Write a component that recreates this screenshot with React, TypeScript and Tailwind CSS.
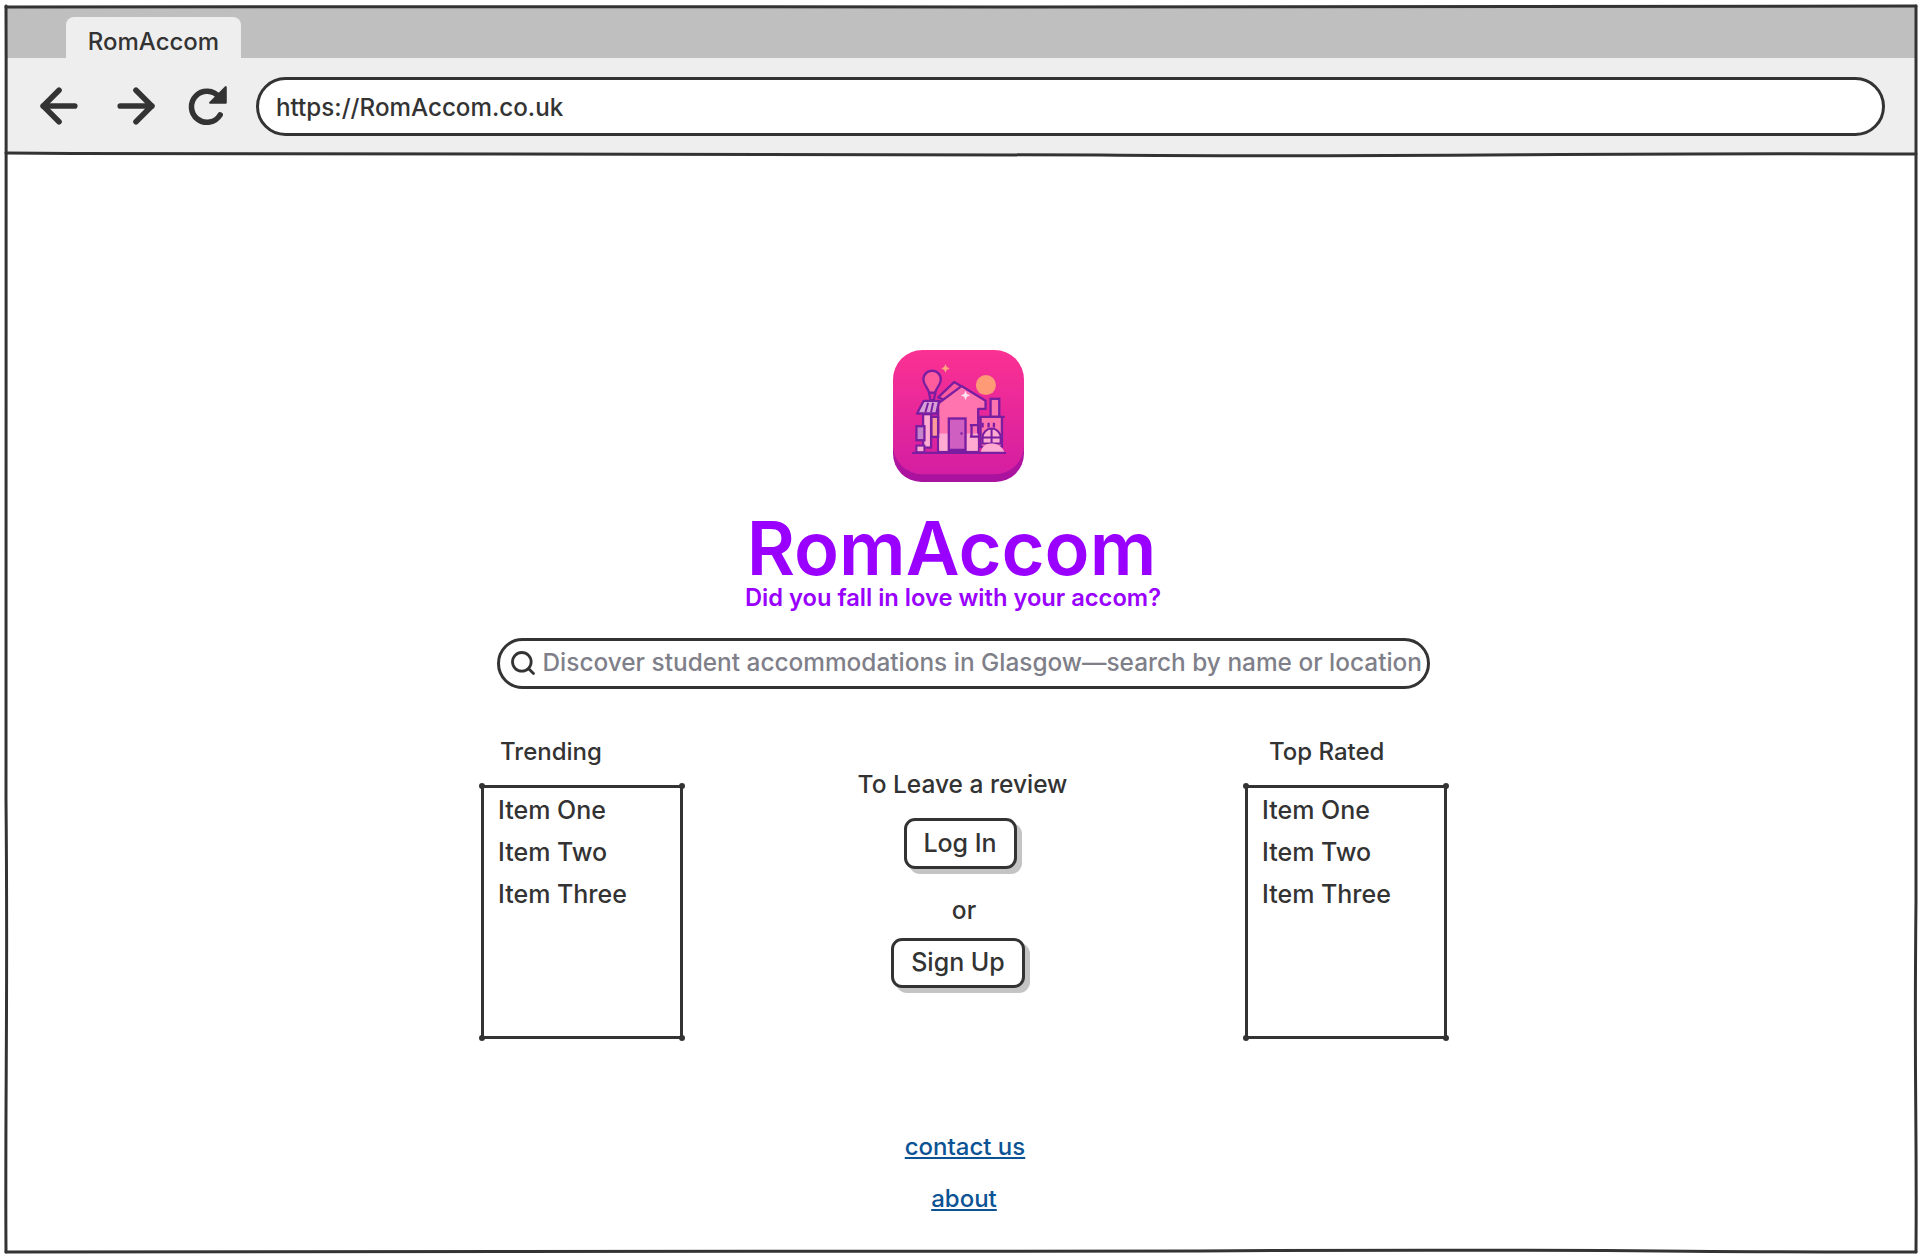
import { ArrowLeft, ArrowRight, Search } from "lucide-react";

const ink = "#333333";

function ReloadIcon() {
  return (
    <svg width="42" height="42" viewBox="0 0 38 38" fill="none">
      <path d="M30 27a14 14 0 1 1 -1 -16" stroke={ink} strokeWidth="5" strokeLinecap="round" />
      <path d="M35 2v14h-14z" fill={ink} stroke={ink} strokeWidth="2" strokeLinejoin="round" />
    </svg>
  );
}

// the app icon, drawn in the coordinates of a 3x crop
function Logo() {
  const line = "#7a1ea1";
  return (
    <svg width="131" height="132" viewBox="70 30 392 395" className="block">
      <defs>
        <linearGradient id="face" x1="0" y1="0" x2="0" y2="1">
          <stop offset="0" stopColor="#fb3192" />
          <stop offset="1" stopColor="#d41ea2" />
        </linearGradient>
        <linearGradient id="base" x1="0" y1="0" x2="0" y2="1">
          <stop offset="0" stopColor="#d41ea2" />
          <stop offset="1" stopColor="#a8129e" />
        </linearGradient>
      </defs>
      <rect x="70" y="70" width="392" height="355" rx="85" fill="url(#base)" />
      <rect x="70" y="30" width="392" height="372" rx="88" fill="url(#face)" />
      <circle cx="348" cy="135" r="30" fill="#ff9a76" />
      <path d="M227 72l4 9 9 4-9 4-4 9-4-9-9-4 9-4z" fill="#ffa67f" />
      <path d="M205 172l48-46 24 14-50 40z" fill="#ff5c9e" stroke={line} strokeWidth="7" strokeLinejoin="round" />
      <path d="M205 190l70-52 72 44v24h-22v126H205z" fill="#ff74ae" stroke={line} strokeWidth="7" strokeLinejoin="round" />
      <rect x="208" y="280" width="116" height="52" fill="#ffaad0" />
      <path d="M287 152l4 10 10 4-10 4-4 10-4-10-10-4 10-4z" fill="#ffe4f2" />
      <path d="M188 92c-16 0-28 12-27 28 1 15 14 22 17 38h18c3-16 16-23 17-38 1-16-11-28-25-28z" fill="#ff5c9e" stroke={line} strokeWidth="7" />
      <path d="M178 158l4 22h10l5-22" fill="none" stroke={line} strokeWidth="7" />
      <path d="M162 182h46l-8 38h-58z" fill="#d9a0d8" stroke={line} strokeWidth="7" strokeLinejoin="round" />
      <path d="M175 188l-8 28M190 188l-6 28" stroke={line} strokeWidth="6" />
      <rect x="160" y="222" width="24" height="100" fill="#ffaad0" stroke={line} strokeWidth="7" />
      <rect x="140" y="258" width="24" height="42" fill="#c684ca" stroke={line} strokeWidth="7" />
      <rect x="140" y="316" width="24" height="20" fill="#ffaad0" stroke={line} strokeWidth="6" />
      <rect x="185" y="230" width="20" height="60" fill="#ff9a9a" stroke={line} strokeWidth="7" />
      <rect x="237" y="235" width="50" height="94" fill="#cf5fc0" stroke={line} strokeWidth="7" />
      <circle cx="275" cy="280" r="3.5" fill={line} />
      <path d="M305 255v34M300 255h26M300 289h26" stroke={line} strokeWidth="7" fill="none" />
      <rect x="362" y="176" width="26" height="54" fill="#ff74ae" stroke={line} strokeWidth="7" />
      <path d="M324 230h80M332 230v90h64v-90" fill="#ff74ae" stroke={line} strokeWidth="7" />
      <path d="M338 262v-14M356 262v-14M372 262v-14" stroke={line} strokeWidth="7" fill="none" />
      <path d="M338 310v-18a27 27 0 0 1 54 0v18zM365 265v45M338 292h54" fill="#ffaad0" stroke={line} strokeWidth="6" />
      <path d="M332 338c4-22 18-30 36-28 18 2 32 12 36 28z" fill="#ffaad0" />
      <path d="M130 338h275" stroke={line} strokeWidth="7" strokeLinecap="round" />
    </svg>
  );
}

function ListBox({ title, titleIndent }: { title: string; titleIndent: string }) {
  return (
    <div className="flex flex-col">
      <div className={`h-[34px] text-[24px] leading-[34px] ${titleIndent}`}>{title}</div>
      <div className="relative mt-[16px] h-[254px] w-[202px] border-[3px] border-[#333333] pt-[1px] pl-[14px] text-[25px] leading-[42px]">
        <span className="absolute -top-[5px] -left-[5px] h-[6px] w-[6px] rounded-full bg-[#333333]" />
        <span className="absolute -top-[5px] -right-[5px] h-[6px] w-[6px] rounded-full bg-[#333333]" />
        <span className="absolute -bottom-[5px] -left-[5px] h-[6px] w-[6px] rounded-full bg-[#333333]" />
        <span className="absolute -bottom-[5px] -right-[5px] h-[6px] w-[6px] rounded-full bg-[#333333]" />
        <div>Item One</div>
        <div>Item Two</div>
        <div>Item Three</div>
      </div>
    </div>
  );
}

function Btn({ label, className }: { label: string; className: string }) {
  return (
    <div className={`flex items-center justify-center rounded-[11px] border-[3px] border-[#333333] bg-white text-[25px] shadow-[5px_5px_0_#c4c4c4] ${className}`}>
      {label}
    </div>
  );
}

export default function App() {
  return (
    <div className="relative flex h-[1258px] w-[1922px] flex-col overflow-hidden bg-white pt-[7px] pl-[7px] pr-[6px] font-['Inter',sans-serif] font-medium text-[#333333]">
      <div className="flex h-[51px] items-end bg-[#bfbfbf] pl-[59px]">
        <div className="flex h-[41px] w-[175px] items-center justify-center rounded-t-[8px] bg-[#eeeeee] pt-[8px] text-[24px]">RomAccom</div>
      </div>
      <div className="flex h-[96px] items-center bg-[#eeeeee] pl-[25px]">
        <ArrowLeft size={54} strokeWidth={2.5} color={ink} className="shrink-0" />
        <ArrowRight size={54} strokeWidth={2.5} color={ink} className="ml-[23px] shrink-0" />
        <div className="ml-[24px]"><ReloadIcon /></div>
        <div className="ml-[27px] flex h-[59px] w-[1629px] items-center rounded-[30px] border-[3px] border-[#333333] bg-white pt-[4px] pl-[17px] text-[24.2px]">https://RomAccom.co.uk</div>
      </div>
      <div className="flex flex-1 flex-col items-center pt-[196px]">
        <div className="-ml-[6px]"><Logo /></div>
        <div className="-ml-[20px] mt-[30px] text-[74px] leading-[72px] font-semibold text-[#9900ff]">RomAccom</div>
        <div className="-ml-[17px] whitespace-nowrap text-[23.7px] leading-[28px] font-semibold text-[#9900ff]">Did you fall in love with your accom?</div>
        <div className="mt-[26px] ml-[3px] flex h-[51px] w-[933px] items-center gap-[6px] rounded-[26px] border-[3px] border-[#333333] pb-[2px] pl-[9px] text-[24.4px] whitespace-nowrap text-[#7f7f8a]">
          <Search size={28} color={ink} strokeWidth={2.4} className="shrink-0" />
          <span>Discover student accommodations in Glasgow—search by name or location</span>
        </div>
        <div className="mt-[46px] ml-[5px] flex w-[966px] justify-between">
          <ListBox title="Trending" titleIndent="pl-[19px]" />
          <div className="flex w-[240px] flex-col items-center pt-[32px] text-[24.5px]">
            <div className="-ml-[3px] leading-[34px] whitespace-nowrap">To Leave a review</div>
            <Btn label="Log In" className="mt-[17px] -ml-[8px] h-[51px] w-[113px]" />
            <div className="mt-[24px] leading-[34px]">or</div>
            <Btn label="Sign Up" className="mt-[11px] -ml-[12px] h-[50px] w-[134px]" />
          </div>
          <ListBox title="Top Rated" titleIndent="pl-[24px]" />
        </div>
        <a href="#" className="mt-[90px] ml-[7px] text-[24px] leading-[36px] font-medium text-[#0b5394] underline">contact us</a>
        <a href="#" className="mt-[16px] ml-[5px] text-[24px] leading-[36px] font-medium text-[#0b5394] underline">about</a>
      </div>
      {/* hand-drawn window outline */}
      <svg className="pointer-events-none absolute inset-0" width="1922" height="1258" fill="none" stroke={ink} strokeLinecap="round">
        <path d="M6 7C300 5 700 8 1000 7S1600 9 1916 6" strokeWidth="3" />
        <path d="M6 153C400 156 800 152 1100 155S1600 152 1916 154" strokeWidth="3" />
        <path d="M6 6C7 300 4 600 6 800S5 1100 6 1252" strokeWidth="3" />
        <path d="M1916 6C1915 300 1918 700 1916 900S1917 1100 1916 1252" strokeWidth="3" />
        <path d="M6 1252C400 1250 800 1254 1200 1251S1700 1253 1916 1252" strokeWidth="3" />
      </svg>
    </div>
  );
}
